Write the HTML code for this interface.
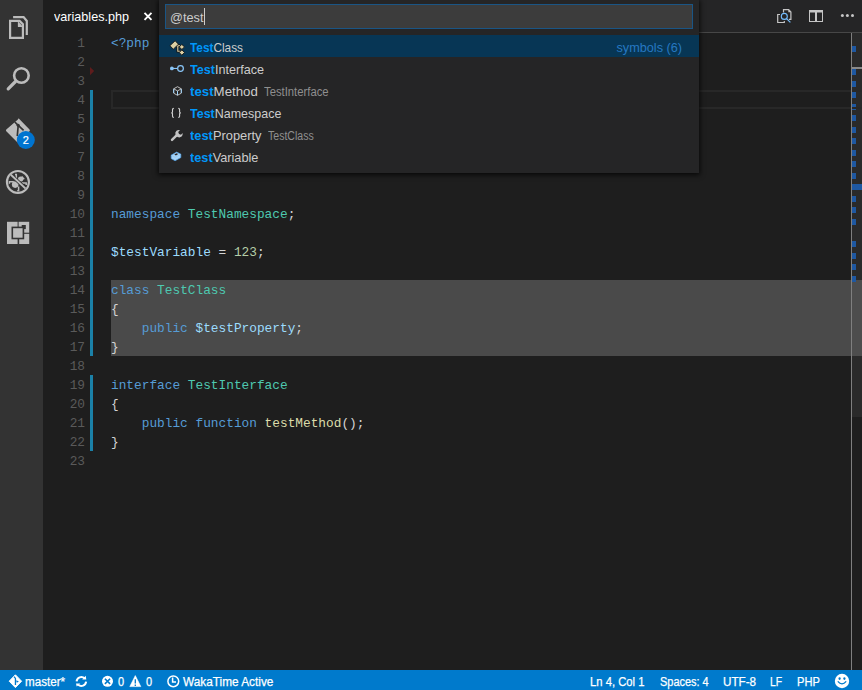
<!DOCTYPE html>
<html><head><meta charset="utf-8">
<style>
*{margin:0;padding:0;box-sizing:border-box}
html,body{width:862px;height:690px;overflow:hidden;background:#1e1e1e;font-family:"Liberation Sans",sans-serif}
.abs{position:absolute}
svg{position:absolute;overflow:visible}
#act{left:0;top:0;width:43px;height:670px;background:#333333}
#tabs{left:43px;top:0;width:819px;height:33px;background:#252526}
#tabline{left:159px;top:32px;width:703px;height:1px;background:#474747}
#tab{left:43px;top:0;width:117px;height:33px;background:#1e1e1e}
#tab .t{position:absolute;left:11px;top:9px;font-size:13px;line-height:15px;color:#ffffff;transform:scaleX(0.97);transform-origin:0 0}
#status{left:0;top:670px;width:862px;height:20px;background:#007acc;color:#fff}
.st{position:absolute;top:5px;font-size:12.5px;line-height:15px;color:#fff;-webkit-text-stroke:0.25px #fff;white-space:nowrap;transform-origin:0 0}
.code{position:absolute;padding-top:1px;left:111px;font-family:"Liberation Mono",monospace;font-size:12.8px;white-space:pre;color:#d4d4d4;height:19px;line-height:19px}
.ln{position:absolute;padding-top:1px;left:43px;width:42px;text-align:right;font-family:"Liberation Mono",monospace;font-size:12.8px;color:#5a5a5a;height:19px;line-height:19px}
.k{color:#569cd6}.ty{color:#4ec9b0}.v{color:#9cdcfe}.n{color:#b5cea8}.f{color:#dcdcaa}
#ruler{left:851px;top:33px;width:1px;height:637px;background:#7f7f7f}
#rbg{left:852px;top:33px;width:10px;height:384px;background:#2a2a2a}
.mk{left:852px;width:4px;height:6px;background:#1e58a2}
#qo{left:159px;top:0;width:540px;height:173px;background:#252526;box-shadow:0 1px 5px 1px rgba(0,0,0,0.75)}
#qin{position:absolute;left:6px;top:4px;width:528px;height:25px;background:#3c3c3c;border:1px solid #1a5585}
.row{position:absolute;left:0;width:540px;height:22px;font-size:13px;color:#cccccc;white-space:nowrap}
.row.sel{background:#073655}
.row .lbl{position:absolute;left:31px;top:5px;line-height:15px;transform-origin:0 0}
.row b{color:#0097fb;font-weight:bold}
.row .desc{position:absolute;top:6px;line-height:15px;font-size:12px;color:#8f8f8f;transform-origin:0 0}
.row .right{position:absolute;left:457.5px;top:5.5px;line-height:15px;font-size:12.7px;color:#2678c2}
.qt{position:absolute;left:4px;top:5px;line-height:15px;font-size:13px;color:#cccccc;transform:scaleX(0.98);transform-origin:0 0}
.caret{position:absolute;left:38px;top:3px;width:1px;height:17px;background:#cccccc}
</style></head><body>
<div id="act" class="abs">
 <!-- explorer -->
 <svg style="left:0;top:0" width="43" height="50" viewBox="0 0 43 50">
  <path d="M13.1 17.1 H23.6 L26.8 21 V35" fill="none" stroke="#bcbcbc" stroke-width="2.2"/>
  <path d="M10.1 20.9 H19.6 L22.9 24.2 V37.9 H10.1 Z" fill="none" stroke="#bcbcbc" stroke-width="2.2"/>
  <path d="M17.9 22 H18.6 L22 25.4 V27 H17.9 Z" fill="#bcbcbc"/>
 </svg>
 <!-- search -->
 <svg style="left:0;top:50" width="43" height="50" viewBox="0 0 43 50">
  <circle cx="21.4" cy="25.5" r="7.3" fill="none" stroke="#bcbcbc" stroke-width="2.6"/>
  <path d="M8.2 38.8 L15.5 31.5" stroke="#bcbcbc" stroke-width="3.2" stroke-linecap="round"/>
 </svg>
 <!-- git -->
 <svg style="left:0;top:100px" width="43" height="60" viewBox="0 0 43 60">
  <path d="M17.9 19.5 Q17.9 18.6 18.8 18.6 L29.5 29.4 Q30.3 30.3 29.5 31.2 L18.8 42 Q17.9 42.8 17 42 L6.3 31.2 Q5.5 30.3 6.3 29.4 Z" fill="#bcbcbc"/>
  <path d="M14.8 22 L18.2 25.3 L17.3 36 M18.2 25.3 L23.6 30.4" fill="none" stroke="#333" stroke-width="1.7"/>
  <circle cx="18.2" cy="25.3" r="1.6" fill="#333"/>
  <circle cx="25.8" cy="40" r="9" fill="#0074d0"/>
  <text x="25.8" y="44" font-family="Liberation Sans" font-size="11" fill="#fff" text-anchor="middle" stroke="#fff" stroke-width="0.2">2</text>
 </svg>
 <!-- debug -->
 <svg style="left:0;top:160px" width="43" height="50" viewBox="0 0 43 50">
  <circle cx="17.9" cy="22" r="11" fill="none" stroke="#bcbcbc" stroke-width="2.1"/>
  <circle cx="15.2" cy="24.6" r="3.3" fill="#bcbcbc"/>
  <circle cx="20.6" cy="19" r="2.6" fill="#bcbcbc"/>
  <path d="M9.4 23.8 V21.7 H13.8 M16.3 19.4 V14.6 H15 M21.6 16.6 L24.2 19.2 M21.8 23 H26.2 V25 M18.6 26.6 V30.8 H17.2" fill="none" stroke="#bcbcbc" stroke-width="1.5"/>
  <path d="M10.8 14.7 L25.3 28.3" stroke="#333" stroke-width="3.6"/>
  <path d="M10.6 14.5 L25.5 28.5" stroke="#bcbcbc" stroke-width="1.8"/>
 </svg>
 <!-- extensions -->
 <svg style="left:0;top:210px" width="43" height="50" viewBox="0 0 43 50">
  <rect x="7" y="11.8" width="10.6" height="22.2" fill="#bcbcbc"/>
  <rect x="18.6" y="11.8" width="10.6" height="10.9" fill="#bcbcbc"/>
  <rect x="19.2" y="23.8" width="10" height="10.2" fill="#bcbcbc"/>
  <rect x="21.7" y="15" width="4.1" height="4.1" fill="#333"/>
  <rect x="12.3" y="17.4" width="11.1" height="11.1" fill="#bcbcbc" stroke="#333" stroke-width="1.6"/>
 </svg>
</div>
<div id="tabs" class="abs"></div>
<div id="tabline" class="abs"></div>
<div id="tab" class="abs"><span class="t">variables.php</span>
 <svg style="left:100px;top:11px" width="10" height="10" viewBox="0 0 10 10"><path d="M1.5 1.8 L8.5 8.8 M8.5 1.8 L1.5 8.8" stroke="#fff" stroke-width="1.9"/></svg>
</div>
<!-- editor actions -->
<svg style="left:770px;top:2px" width="30" height="30" viewBox="0 0 30 30">
 <path d="M13.5 10.5 V7.7 H18.7 L20.9 9.9 V17.4 H19" fill="none" stroke="#c5c5c5" stroke-width="1.2"/>
 <path d="M18.3 7.4 L21.2 10.3 H18.3 Z" fill="#c5c5c5"/>
 <path d="M10 12.5 H7.7 V20.5 H14.3 V19" fill="none" stroke="#c5c5c5" stroke-width="1.2"/>
 <circle cx="14.3" cy="14.4" r="3" fill="none" stroke="#75beff" stroke-width="1.1"/>
 <path d="M16.5 16.6 L20.4 20.4" stroke="#75beff" stroke-width="1.2"/>
</svg>
<svg style="left:802px;top:2px" width="30" height="30" viewBox="0 0 30 30">
 <rect x="7.5" y="8.5" width="13" height="11" fill="none" stroke="#c5c5c5" stroke-width="1"/>
 <rect x="7" y="8" width="14" height="2.5" fill="#c5c5c5"/>
 <rect x="13" y="8" width="2" height="12" fill="#c5c5c5"/>
</svg>
<svg style="left:832px;top:2px" width="30" height="30" viewBox="0 0 30 30">
 <circle cx="10.4" cy="13.4" r="1.5" fill="#c5c5c5"/><circle cx="15.4" cy="13.4" r="1.5" fill="#c5c5c5"/><circle cx="20.5" cy="13.4" r="1.5" fill="#c5c5c5"/>
</svg>

<!-- editor decorations -->
<div class="abs" style="left:111px;top:280px;width:751px;height:76px;background:#4a4a4a"></div>

<div class="abs" style="left:90px;top:90px;width:3px;height:266px;background:#1b81a8"></div>
<div class="abs" style="left:90px;top:375px;width:3px;height:76px;background:#1b81a8"></div>
<svg style="left:90px;top:67px" width="5" height="9" viewBox="0 0 5 9"><path d="M0 0 L4.2 4.1 L0 8.2 Z" fill="#5e1c1c"/></svg>
<div id="rbg" class="abs"></div>
<div class="abs" style="left:852px;top:67px;width:10px;height:2px;background:#8a8a8a"></div>
<div class="abs" style="left:852px;top:280px;width:10px;height:76px;background:#4d4d4d"></div>
<div class="abs mk" style="top:46px"></div>
<div class="abs mk" style="top:69px"></div>
<div class="abs mk" style="top:81px"></div>
<div class="abs mk" style="top:92px"></div>
<div class="abs mk" style="top:104px"></div>
<div class="abs mk" style="top:115px"></div>
<div class="abs mk" style="top:127px"></div>
<div class="abs mk" style="top:138px"></div>
<div class="abs mk" style="top:150px"></div>
<div class="abs mk" style="top:161px"></div>
<div class="abs mk" style="top:173px"></div>
<div class="abs mk" style="top:196px"></div>
<div class="abs mk" style="top:207px"></div>
<div class="abs mk" style="top:219px"></div>
<div class="abs mk" style="top:241px"></div>
<div class="abs mk" style="top:253px"></div>
<div class="abs mk" style="top:264px"></div>
<div class="abs mk" style="top:276px"></div>
<div class="abs mk" style="top:184px;width:10px"></div>
<div class="abs" style="left:111px;top:90px;width:751px;height:19px;border:2px solid #282828;border-right:none"></div>
<div id="ruler" class="abs"></div>

<div id="lines">
<div class="ln" style="top:33px">1</div>
<div class="code" style="top:33px"><span class="k">&lt;?php</span></div>
<div class="ln" style="top:52px">2</div>
<div class="ln" style="top:71px">3</div>
<div class="ln" style="top:90px">4</div>
<div class="ln" style="top:109px">5</div>
<div class="ln" style="top:128px">6</div>
<div class="ln" style="top:147px">7</div>
<div class="ln" style="top:166px">8</div>
<div class="ln" style="top:185px">9</div>
<div class="ln" style="top:204px">10</div>
<div class="code" style="top:204px"><span class="k">namespace</span> <span class="ty">TestNamespace</span>;</div>
<div class="ln" style="top:223px">11</div>
<div class="ln" style="top:242px">12</div>
<div class="code" style="top:242px"><span class="v">$testVariable</span> = <span class="n">123</span>;</div>
<div class="ln" style="top:261px">13</div>
<div class="ln" style="top:280px">14</div>
<div class="code" style="top:280px"><span class="k">class</span> <span class="ty">TestClass</span></div>
<div class="ln" style="top:299px">15</div>
<div class="code" style="top:299px">{</div>
<div class="ln" style="top:318px">16</div>
<div class="code" style="top:318px">    <span class="k">public</span> <span class="v">$testProperty</span>;</div>
<div class="ln" style="top:337px">17</div>
<div class="code" style="top:337px">}</div>
<div class="ln" style="top:356px">18</div>
<div class="ln" style="top:375px">19</div>
<div class="code" style="top:375px"><span class="k">interface</span> <span class="ty">TestInterface</span></div>
<div class="ln" style="top:394px">20</div>
<div class="code" style="top:394px">{</div>
<div class="ln" style="top:413px">21</div>
<div class="code" style="top:413px">    <span class="k">public</span> <span class="k">function</span> <span class="f">testMethod</span>();</div>
<div class="ln" style="top:432px">22</div>
<div class="code" style="top:432px">}</div>
<div class="ln" style="top:451px">23</div>
</div>

<div id="qo" class="abs"><div id="qin"><span class="qt">@test</span><span class="caret"></span></div>
<div class="row sel" style="top:35px"><span class="lbl" style="transform:scaleX(0.91)"><b>Test</b>Class</span><span class="right">symbols (6)</span></div>
<div class="row" style="top:57px"><span class="lbl" style="transform:scaleX(0.97)"><b>Test</b>Interface</span></div>
<div class="row" style="top:79px"><span class="lbl" style="transform:scaleX(1.02)"><b>test</b>Method</span><span class="desc" style="left:105px;transform:scaleX(0.94)">TestInterface</span></div>
<div class="row" style="top:101px"><span class="lbl" style="transform:scaleX(0.96)"><b>Test</b>Namespace</span></div>
<div class="row" style="top:123px"><span class="lbl" style="transform:scaleX(0.99)"><b>test</b>Property</span><span class="desc" style="left:109px;transform:scaleX(0.88)">TestClass</span></div>
<div class="row" style="top:145px"><span class="lbl" style="transform:scaleX(0.98)"><b>test</b>Variable</span></div>
 <!-- class icon -->
 <svg style="left:7px;top:38px" width="22" height="22" viewBox="0 0 22 22">
  <path d="M10.3 7.7 H14 M11.8 7.7 V13.2 H14.5" fill="none" stroke="#141414" stroke-width="2.8"/>
  <path d="M10.3 7.7 H14 M11.8 7.7 V13.2 H14.5" fill="none" stroke="#dcd0a4" stroke-width="1.1"/>
  <path d="M3.9 7.7 L9.1 2.8 L12.5 6.2 L7.3 11.2 Z" fill="#dcd0a4" stroke="#141414" stroke-width="0.9"/>
  <path d="M13.2 9 L15.8 6.4 L18.5 8.9 L15.9 11.4 Z" fill="#dcd0a4" stroke="#141414" stroke-width="0.9"/>
  <path d="M13.2 14.6 L15.8 11.9 L18.5 14.4 L15.9 17.2 Z" fill="#dcd0a4" stroke="#141414" stroke-width="0.9"/>
 </svg>
 <!-- interface icon -->
 <svg style="left:7px;top:60px" width="22" height="22" viewBox="0 0 22 22">
  <circle cx="5.9" cy="8.45" r="1.9" fill="#8ac6f8"/>
  <path d="M7 8.45 H11.5" stroke="#8ac6f8" stroke-width="1.1"/>
  <circle cx="14.5" cy="8.45" r="2.85" fill="none" stroke="#8ac6f8" stroke-width="1.25"/>
 </svg>
 <!-- method icon -->
 <svg style="left:7px;top:80px" width="22" height="22" viewBox="0 0 22 22">
  <path d="M11.5 6.7 L15.3 8.8 V13.2 L11.5 15.3 L7.7 13.2 V8.8 Z" fill="none" stroke="#c5c5c5" stroke-width="0.95"/>
  <path d="M7.7 8.8 L11.5 10.9 L15.3 8.8 M11.5 10.9 V15.3" fill="none" stroke="#c5c5c5" stroke-width="0.95"/>
  <path d="M7.7 9.2 V13 M15.3 9.2 V13 M11.5 11.3 V14.9" stroke="#9cd5ff" stroke-width="0.95"/>
 </svg>
 <!-- namespace icon -->
 <svg style="left:7px;top:102px" width="22" height="22" viewBox="0 0 22 22">
  <path d="M7.8 6.4 Q6.5 6.4 6.5 7.6 V10 Q6.5 10.9 5.3 10.9 Q6.5 10.9 6.5 11.8 V14.2 Q6.5 15.4 7.8 15.4" fill="none" stroke="#d4d4d4" stroke-width="1.1"/>
  <path d="M12.3 6.4 Q13.6 6.4 13.6 7.6 V10 Q13.6 10.9 14.8 10.9 Q13.6 10.9 13.6 11.8 V14.2 Q13.6 15.4 12.3 15.4" fill="none" stroke="#d4d4d4" stroke-width="1.1"/>
 </svg>
 <!-- property icon (wrench) -->
 <svg style="left:7px;top:124px" width="22" height="22" viewBox="0 0 22 22">
  <path d="M6 15.9 L10.3 11.6" stroke="#c5c5c5" stroke-width="2.4" stroke-linecap="round"/>
  <path d="M9.5 10.8 Q8.7 8 10.5 6.7 Q12.2 5.5 14 6.2 L12.2 8.1 L13 10.1 L15 10.8 L16.6 9.1 Q17 11.3 15.6 12.6 Q13.8 14 11.5 12.9 Z" fill="#c5c5c5"/>
 </svg>
 <!-- variable icon -->
 <svg style="left:7px;top:146px" width="22" height="22" viewBox="0 0 22 22">
  <path d="M5.2 9.2 L10.7 6.1 L14.8 8.2 V11.6 L9.1 14.7 L5.2 12.6 Z" fill="#a9d4f7" stroke="#52a8f2" stroke-width="0.7"/>
  <path d="M5.2 9.2 L9.2 11.4 L14.8 8.2" fill="none" stroke="#8cc4f4" stroke-width="0.6"/>
  <path d="M8.3 8.6 L10.6 7.3 L12.2 8.1 L9.9 9.5 Z" fill="#2b2525"/>
 </svg>
</div>

<div id="status" class="abs">
 <svg style="left:0;top:0" width="30" height="20" viewBox="0 0 30 20">
  <path d="M15.4 4.8 L21.6 11.2 L15.4 17.6 L9.2 11.2 Z" fill="#fff" stroke="#fff" stroke-width="1" stroke-linejoin="round"/>
  <path d="M14 6.6 L15.45 8.4 V14.9" fill="none" stroke="#007acc" stroke-width="1.3"/><path d="M16.4 10.3 L18.9 11.5 L16.8 12.8 Q16 11.5 16.4 10.3 Z" fill="#007acc"/>
 </svg>
 <span class="st" style="left:25px;transform:scaleX(0.93)">master*</span>
 <svg style="left:70px;top:0" width="24" height="20" viewBox="0 0 24 20">
  <path d="M6.6 11.4 A4.8 4.8 0 0 1 14.6 8.2" fill="none" stroke="#fff" stroke-width="2"/>
  <path d="M16.1 11.6 A4.8 4.8 0 0 1 8.2 14.8" fill="none" stroke="#fff" stroke-width="2"/>
  <path d="M12.2 9.6 H16.3 L15.7 5.8 Z" fill="#fff"/>
  <path d="M6 13.4 H10.3 L6.7 16.6 Z" fill="#fff"/>
 </svg>
 <svg style="left:100px;top:0" width="16" height="20" viewBox="0 0 16 20">
  <circle cx="7.5" cy="11.3" r="5.5" fill="#fff"/>
  <path d="M4.9 8.7 L10.1 13.9 M10.1 8.7 L4.9 13.9" stroke="#007acc" stroke-width="1.6"/>
 </svg>
 <span class="st" style="left:117.6px;transform:scaleX(0.88)">0</span>
 <svg style="left:128px;top:0" width="16" height="20" viewBox="0 0 16 20">
  <path d="M7.3 5.6 L12.8 16.6 H1.8 Z" fill="#fff" stroke="#fff" stroke-linejoin="round" stroke-width="0.6"/>
  <path d="M7.3 9.3 V13.6 M7.3 14.6 V15.9" stroke="#007acc" stroke-width="1.3"/>
 </svg>
 <span class="st" style="left:145.8px;transform:scaleX(0.88)">0</span>
 <svg style="left:165px;top:0" width="18" height="20" viewBox="0 0 18 20">
  <circle cx="8.3" cy="11.3" r="5.4" fill="none" stroke="#fff" stroke-width="1.5"/>
  <path d="M7.6 7.6 V12 H11" fill="none" stroke="#fff" stroke-width="1.5"/>
 </svg>
 <span class="st" style="left:183px;transform:scaleX(0.945)">WakaTime Active</span>
 <span class="st" style="left:590px;transform:scaleX(0.9)">Ln 4, Col 1</span>
 <span class="st" style="left:659.5px;transform:scaleX(0.876)">Spaces: 4</span>
 <span class="st" style="left:723px;transform:scaleX(0.935)">UTF-8</span>
 <span class="st" style="left:769.5px;transform:scaleX(0.83)">LF</span>
 <span class="st" style="left:796.5px;transform:scaleX(0.89)">PHP</span>
 <svg style="left:830px;top:0" width="24" height="20" viewBox="0 0 24 20">
  <circle cx="12" cy="11" r="7.2" fill="#fff"/>
  <ellipse cx="9.6" cy="8.6" rx="1.1" ry="1.4" fill="#007acc"/>
  <ellipse cx="14.4" cy="8.6" rx="1.1" ry="1.4" fill="#007acc"/>
  <path d="M7.8 11.4 Q12 16.2 16.2 11.4" fill="none" stroke="#007acc" stroke-width="1.3"/>
 </svg>
</div>
</body></html>
